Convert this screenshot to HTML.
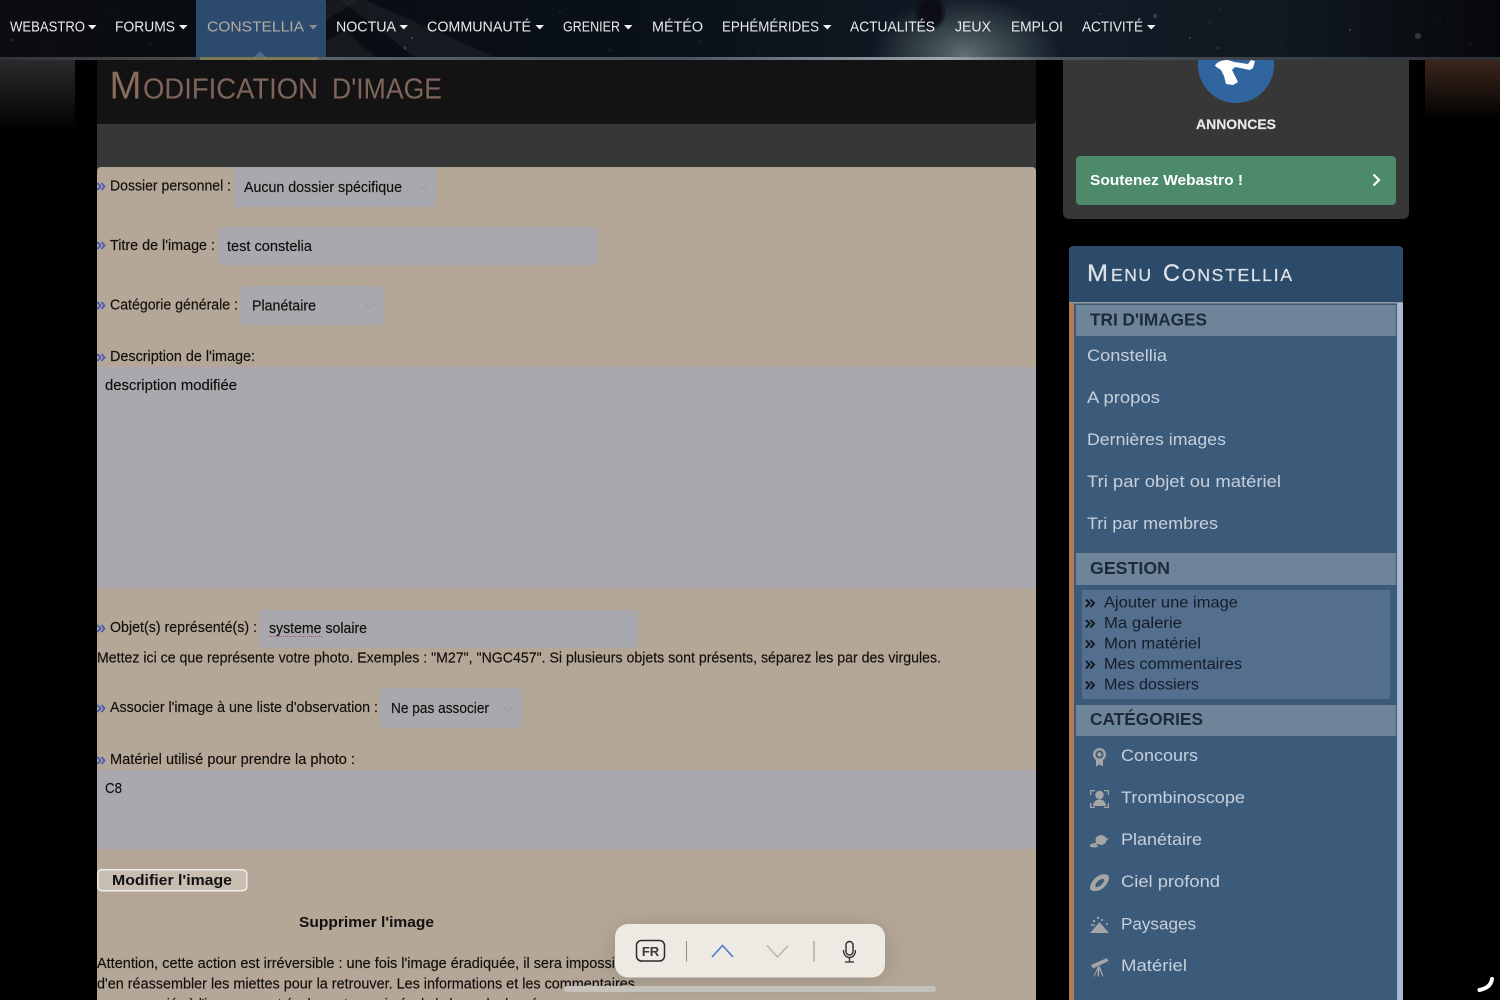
<!DOCTYPE html>
<html lang="fr"><head><meta charset="utf-8"><title>Modification d'image</title>
<style>
html,body{margin:0;padding:0;background:#000;width:1500px;height:1000px;overflow:hidden}
svg{display:block;position:absolute;left:0;top:0;filter:blur(.3px)}
text{font-family:"Liberation Sans",sans-serif}
.n{font-size:15px;fill:#e9ebed}
.f{font-size:14.5px;fill:#120f0b;stroke:#120f0b;stroke-width:.15px}
.l{font-size:17px;fill:#c5d0db}
.h{font-size:17.5px;font-weight:bold;fill:#1d2a38}
.s{font-size:15.5px;fill:#141d28}
</style></head><body>
<svg width="1500" height="1000" viewBox="0 0 1500 1000" xmlns="http://www.w3.org/2000/svg">
<defs>
<linearGradient id="nav" x1="0" x2="1" y1="0" y2="0">
<stop offset="0" stop-color="#0b0d11"/><stop offset=".2" stop-color="#0a0d12"/><stop offset=".45" stop-color="#0a111a"/><stop offset=".7" stop-color="#121c27"/><stop offset=".87" stop-color="#10171f"/><stop offset="1" stop-color="#07080b"/>
</linearGradient>
<radialGradient id="glow" cx=".5" cy=".5" r=".5"><stop offset="0" stop-color="#66757a" stop-opacity=".95"/><stop offset=".6" stop-color="#4c5a60" stop-opacity=".5"/><stop offset="1" stop-color="#4c5a60" stop-opacity="0"/></radialGradient>
<linearGradient id="strip" x1="0" x2="1" y1="0" y2="0">
<stop offset="0" stop-color="#2f3338"/><stop offset=".13" stop-color="#4a4e50"/><stop offset=".17" stop-color="#5f6668"/><stop offset=".45" stop-color="#475260"/><stop offset=".63" stop-color="#9eaab4"/><stop offset=".7" stop-color="#4c5660"/><stop offset="1" stop-color="#2b2e33"/>
</linearGradient>
<linearGradient id="lg" x1="0" x2="0" y1="0" y2="1"><stop offset="0" stop-color="#2a2a2a"/><stop offset="1" stop-color="#000"/></linearGradient>
<linearGradient id="rg" x1="0" x2="0" y1="0" y2="1"><stop offset="0" stop-color="#3b261c"/><stop offset="1" stop-color="#000"/></linearGradient>
<filter id="sh" x="-20%" y="-40%" width="140%" height="180%"><feGaussianBlur stdDeviation="14"/></filter>
<filter id="b1"><feGaussianBlur stdDeviation="1.500"/></filter>
<clipPath id="navc"><rect width="1500" height="58"/></clipPath>
</defs>

<rect width="1500" height="1000" fill="#000"/>
<rect x="0" y="60" width="75" height="70" fill="url(#lg)"/>
<rect x="1425" y="60" width="75" height="60" fill="url(#rg)"/>

<!-- main column -->
<rect x="97" y="60" width="939" height="940" fill="#373737"/>
<path d="M97 58H1036V120a4 4 0 0 1-4 4H97Z" fill="#131313"/>
<path d="M97 171a4 4 0 0 1 4-4H1032a4 4 0 0 1 4 4V1000H97Z" fill="#b4a797"/>

<text x="109.500" y="98.500" font-size="39" fill="#8a6c5c" textLength="32" lengthAdjust="spacingAndGlyphs">M</text>
<text x="143" y="98.500" font-size="28.500" fill="#80665a" textLength="175" lengthAdjust="spacingAndGlyphs">ODIFICATION</text>
<text x="332" y="98.500" font-size="28.500" fill="#80665a" textLength="110" lengthAdjust="spacingAndGlyphs">D'IMAGE</text>

<!-- fields -->
<g fill="#a8a8ae">
<rect x="234" y="167" width="202" height="40" rx="4"/>
<rect x="218" y="227" width="379" height="38" rx="4"/>
<rect x="241" y="286" width="142" height="39" rx="4"/>
<rect x="97" y="367" width="939" height="221"/>
<rect x="259" y="610" width="379" height="38" rx="4"/>
<rect x="380" y="688" width="142" height="40" rx="4"/>
<rect x="97" y="770" width="939" height="79"/>
</g>
<g fill="none" stroke="#9c9ca3" stroke-width="1">
<path d="M418 185l4.500 4 4.500-4"/><path d="M365 304l4.500 4 4.500-4"/><path d="M504 707l4.500 4 4.500-4"/>
</g>

<!-- bullets -->
<g fill="none" stroke="#4a5cb4" stroke-width="1.800">
<path d="M97.500 183l3 3.500-3 3.500M101.500 183l3 3.500-3 3.500"/>
<path d="M97.500 242l3 3.500-3 3.500M101.500 242l3 3.500-3 3.500"/>
<path d="M97.500 302l3 3.500-3 3.500M101.500 302l3 3.500-3 3.500"/>
<path d="M97.500 354l3 3.500-3 3.500M101.500 354l3 3.500-3 3.500"/>
<path d="M97.500 625l3 3.500-3 3.500M101.500 625l3 3.500-3 3.500"/>
<path d="M97.500 705l3 3.500-3 3.500M101.500 705l3 3.500-3 3.500"/>
<path d="M97.500 757l3 3.500-3 3.500M101.500 757l3 3.500-3 3.500"/>
</g>

<!-- form text -->
<text class="f" x="110" y="190.500" textLength="121" lengthAdjust="spacingAndGlyphs">Dossier personnel :</text>
<text class="f" x="244" y="192" textLength="158" lengthAdjust="spacingAndGlyphs">Aucun dossier spécifique</text>
<text class="f" x="110" y="250" textLength="105" lengthAdjust="spacingAndGlyphs">Titre de l'image :</text>
<text class="f" x="227" y="251" textLength="85" lengthAdjust="spacingAndGlyphs">test constelia</text>
<text class="f" x="110" y="309.500" textLength="128" lengthAdjust="spacingAndGlyphs">Catégorie générale :</text>
<text class="f" x="252" y="310.500" textLength="64" lengthAdjust="spacingAndGlyphs">Planétaire</text>
<text class="f" x="110" y="361" textLength="145" lengthAdjust="spacingAndGlyphs">Description de l'image:</text>
<text class="f" x="105" y="390" textLength="132" lengthAdjust="spacingAndGlyphs">description modifiée</text>
<text class="f" x="110" y="632" textLength="147" lengthAdjust="spacingAndGlyphs">Objet(s) représenté(s) :</text>
<text class="f" x="269" y="633" textLength="98" lengthAdjust="spacingAndGlyphs">systeme solaire</text>
<path d="M269 636.500H322" stroke="#b84a68" stroke-width="1" stroke-dasharray="1 1"/>
<text class="f" x="97" y="662.500" textLength="844" lengthAdjust="spacingAndGlyphs">Mettez ici ce que représente votre photo. Exemples : "M27", "NGC457". Si plusieurs objets sont présents, séparez les par des virgules.</text>
<text class="f" x="110" y="712" textLength="268" lengthAdjust="spacingAndGlyphs">Associer l'image à une liste d'observation :</text>
<text class="f" x="391" y="713" textLength="98" lengthAdjust="spacingAndGlyphs">Ne pas associer</text>
<text class="f" x="110" y="764" textLength="245" lengthAdjust="spacingAndGlyphs">Matériel utilisé pour prendre la photo :</text>
<text class="f" x="105" y="793" textLength="17" lengthAdjust="spacingAndGlyphs">C8</text>

<!-- button -->
<rect x="97.750" y="869.750" width="149" height="21" rx="4" fill="#c7bdb0" stroke="#f0ede8" stroke-width="1.500"/>
<text x="112" y="885" textLength="120" lengthAdjust="spacingAndGlyphs" font-size="14.500" font-weight="bold" fill="#111">Modifier l'image</text>
<text x="299" y="927" textLength="135" lengthAdjust="spacingAndGlyphs" font-size="14.500" font-weight="bold" fill="#111">Supprimer l'image</text>
<text class="f" x="97" y="968" textLength="518" lengthAdjust="spacingAndGlyphs">Attention, cette action est irréversible : une fois l'image éradiquée, il sera impossi</text>
<text class="f" x="97" y="988.500" textLength="538" lengthAdjust="spacingAndGlyphs">d'en réassembler les miettes pour la retrouver. Les informations et les commentaires</text>
<text class="f" x="132" y="1009" textLength="420" lengthAdjust="spacingAndGlyphs">associés à l'image seront également supprimés de la base de données</text>

<!-- right card -->
<path d="M1063 58H1409V213a6 6 0 0 1-6 6H1069a6 6 0 0 1-6-6Z" fill="#373737"/>
<circle cx="1236" cy="65" r="38" fill="#31659f"/>
<path d="M1215 66C1216 62 1222 60 1228 60L1234 62 1248 64 1251 60 1255 61 1253 68 1250 70 1235 67 1232 70 1238 82 1233 85 1226 84 1224 76 1221 70Z" fill="#fff"/>
<text x="1196" y="129" textLength="80" lengthAdjust="spacingAndGlyphs" font-size="14" font-weight="bold" fill="#e8e8e8" stroke="#e8e8e8" stroke-width=".2">ANNONCES</text>
<rect x="1076" y="156" width="320" height="49" rx="4" fill="#4c8a6b"/>
<text x="1090" y="185" textLength="153" lengthAdjust="spacingAndGlyphs" font-size="14.500" font-weight="bold" fill="#fff">Soutenez Webastro !</text>
<path d="M1373.500 174.500l5.500 5.500-5.500 5.500" fill="none" stroke="#fff" stroke-width="2.200"/>

<!-- sidebar -->
<rect x="1069" y="300" width="334" height="700" fill="#3c5a7a"/>
<path d="M1069 250a4 4 0 0 1 4-4H1399a4 4 0 0 1 4 4V302H1069Z" fill="#2c4a6a"/>
<rect x="1069" y="302" width="334" height="1.500" fill="#8f9aa6"/>
<rect x="1069" y="303" width="5" height="697" fill="#b07b57"/>
<rect x="1397" y="303" width="6" height="697" fill="#a8b8d0"/>
<rect x="1076" y="305" width="320" height="31" fill="#6e8499"/>
<rect x="1076" y="553" width="320" height="32" fill="#6e8499"/>
<rect x="1082" y="590" width="308" height="109" fill="#546f8e"/>
<rect x="1076" y="705" width="320" height="31" fill="#6e8499"/>

<g fill="#dde2e6" stroke="#dde2e6" stroke-width=".25">
<text x="1087" y="281" font-size="24" textLength="21" lengthAdjust="spacingAndGlyphs">M</text>
<text x="1111" y="281" font-size="17.500" textLength="40" lengthAdjust="spacing">ENU</text>
<text x="1163" y="281" font-size="24" textLength="17" lengthAdjust="spacingAndGlyphs">C</text>
<text x="1182" y="281" font-size="17.500" textLength="110" lengthAdjust="spacing">ONSTELLIA</text>
</g>
<text class="h" x="1090" y="325.500" textLength="117" lengthAdjust="spacingAndGlyphs">TRI D'IMAGES</text>
<text class="h" x="1090" y="574" textLength="80" lengthAdjust="spacingAndGlyphs">GESTION</text>
<text class="h" x="1090" y="725" textLength="113" lengthAdjust="spacingAndGlyphs">CATÉGORIES</text>

<text class="l" x="1087" y="361" textLength="80" lengthAdjust="spacingAndGlyphs">Constellia</text>
<text class="l" x="1087" y="403" textLength="73" lengthAdjust="spacingAndGlyphs">A propos</text>
<text class="l" x="1087" y="445" textLength="139" lengthAdjust="spacingAndGlyphs">Dernières images</text>
<text class="l" x="1087" y="487" textLength="194" lengthAdjust="spacingAndGlyphs">Tri par objet ou matériel</text>
<text class="l" x="1087" y="529" textLength="131" lengthAdjust="spacingAndGlyphs">Tri par membres</text>

<text class="s" x="1104" y="607.500" textLength="134" lengthAdjust="spacingAndGlyphs">Ajouter une image</text>
<text class="s" x="1104" y="628" textLength="78" lengthAdjust="spacingAndGlyphs">Ma galerie</text>
<text class="s" x="1104" y="648.500" textLength="97" lengthAdjust="spacingAndGlyphs">Mon matériel</text>
<text class="s" x="1104" y="669" textLength="138" lengthAdjust="spacingAndGlyphs">Mes commentaires</text>
<text class="s" x="1104" y="689.500" textLength="95" lengthAdjust="spacingAndGlyphs">Mes dossiers</text>
<g fill="none" stroke="#10161e" stroke-width="1.900">
<path d="M1086 599.500l3.500 3.500-3.500 4M1090.500 599.500l3.500 3.500-3.500 4"/>
<path d="M1086 620l3.500 3.500-3.500 4M1090.500 620l3.500 3.500-3.500 4"/>
<path d="M1086 640.500l3.500 3.500-3.500 4M1090.500 640.500l3.500 3.500-3.500 4"/>
<path d="M1086 661l3.500 3.500-3.500 4M1090.500 661l3.500 3.500-3.500 4"/>
<path d="M1086 681.500l3.500 3.500-3.500 4M1090.500 681.500l3.500 3.500-3.500 4"/>
</g>

<text class="l" x="1121" y="761" textLength="77" lengthAdjust="spacingAndGlyphs">Concours</text>
<text class="l" x="1121" y="803" textLength="124" lengthAdjust="spacingAndGlyphs">Trombinoscope</text>
<text class="l" x="1121" y="845" textLength="81" lengthAdjust="spacingAndGlyphs">Planétaire</text>
<text class="l" x="1121" y="887" textLength="99" lengthAdjust="spacingAndGlyphs">Ciel profond</text>
<text class="l" x="1121" y="929.500" textLength="75" lengthAdjust="spacingAndGlyphs">Paysages</text>
<text class="l" x="1121" y="971" textLength="66" lengthAdjust="spacingAndGlyphs">Matériel</text>

<!-- category icons -->
<g fill="#a4a5a5">
<circle cx="1099.500" cy="754.500" r="6.500"/><circle cx="1099.500" cy="754.500" r="4" fill="#3c5a7a"/><circle cx="1099.500" cy="754.500" r="2.200"/>
<path d="M1096 760h7v6.500l-3.500-2-3.500 2Z"/>
<path d="M1090 795v-5h5v1.300h-3.700V795ZM1104 790h5v5h-1.300v-3.700H1104ZM1090 803h1.300v3.700h3.700v1.300h-5ZM1107.700 803h1.300v5h-5v-1.300h3.700Z"/>
<circle cx="1099.500" cy="795" r="4.200"/><path d="M1093 806c.3-4.500 3-6.500 6.500-6.500s6.200 2 6.500 6.500Z"/>
<ellipse cx="1101" cy="840" rx="5.500" ry="5"/><path d="M1090 846c5-1 13-3 19-7.500l-1.500-.5c-5 3-12 5-17 6Z"/><ellipse cx="1094" cy="846" rx="4" ry="1.500"/>
<path d="M1090 888c0-4.500 4-10 9-12.500 4-2 9.500-1.500 10 1.500.5 3.500-3 9-7 12-4.500 3-12 3-12-1Zm6-1c1.800.6 4.500-1 6.500-3.500 1.800-2.200 2.200-4 1-4.500-1.800-.5-4.500 1-6.500 3.300-1.800 2.300-2.300 4-1 4.700Z" fill-rule="evenodd"/>
<path d="M1090 933l9.500-11 9.500 11Z"/><circle cx="1094" cy="921" r="1.200"/><circle cx="1098" cy="918" r="1.200"/><circle cx="1102" cy="920" r="1.100"/><circle cx="1092" cy="925" r="1"/><circle cx="1107" cy="924" r="1"/><circle cx="1094" cy="925" r=".9"/>
<path d="M1091 965l16-7 1.500 3-15.500 7.500Z"/><path d="M1098 966.500h2l3.500 10h-1.200l-2.800-7-.6 7h-1.200l-.4-7-2.800 7h-1.200Z"/>
</g>

<!-- nav -->
<rect width="1500" height="58" fill="url(#nav)"/>
<g clip-path="url(#navc)">
<ellipse cx="965" cy="55" rx="95" ry="60" fill="url(#glow)"/>
<ellipse cx="930" cy="13" rx="14" ry="16" fill="#0a0f15" filter="url(#b1)"/>
<path d="M225 57L330 0h30L260 57Z M300 57L345 30 L375 57Z" fill="#252a2e" opacity=".45"/>
<path d="M340 0h25l130 57h-80Z" fill="#2a3036" opacity=".35"/>
<g fill="#8d98a2" opacity=".3">
<circle cx="12" cy="40" r="1"/><circle cx="48" cy="48" r=".8"/><circle cx="112" cy="14" r=".8"/><circle cx="150" cy="44" r=".8"/><circle cx="412" cy="38" r="1.200"/><circle cx="405" cy="48" r="1.500"/><circle cx="560" cy="12" r=".8"/><circle cx="610" cy="50" r=".8"/><circle cx="700" cy="42" r=".8"/><circle cx="760" cy="50" r=".8"/><circle cx="1155" cy="16" r="2"/><circle cx="1100" cy="14" r=".9"/><circle cx="1190" cy="38" r="1"/><circle cx="1210" cy="22" r=".8"/><circle cx="1280" cy="46" r=".8"/><circle cx="1218" cy="48" r="1"/><circle cx="1350" cy="30" r="1.200"/><circle cx="1220" cy="10" r=".7"/><circle cx="1418" cy="36" r="3"/><circle cx="1440" cy="18" r=".8"/><circle cx="1470" cy="44" r=".8"/>
</g>
</g>
<rect x="196" y="0" width="130" height="57" fill="#2b4a6e"/>
<path d="M254 57l6-6 6 6Z" fill="#4f6c88"/>
<rect y="57" width="1500" height="3" fill="url(#strip)"/>
<rect x="200" y="57" width="118" height="3" fill="#7c7b56"/>

<text class="n" x="10" y="31.500" textLength="75" lengthAdjust="spacingAndGlyphs">WEBASTRO</text>
<text class="n" x="115" y="31.500" textLength="60" lengthAdjust="spacingAndGlyphs">FORUMS</text>
<text x="207" y="31.500" textLength="97" lengthAdjust="spacingAndGlyphs" font-size="15" fill="#b3aca2">CONSTELLIA</text>
<text class="n" x="336" y="31.500" textLength="60" lengthAdjust="spacingAndGlyphs">NOCTUA</text>
<text class="n" x="427" y="31.500" textLength="104" lengthAdjust="spacingAndGlyphs">COMMUNAUTÉ</text>
<text class="n" x="563" y="31.500" textLength="57" lengthAdjust="spacingAndGlyphs">GRENIER</text>
<text class="n" x="652" y="31.500" textLength="51" lengthAdjust="spacingAndGlyphs">MÉTÉO</text>
<text class="n" x="722" y="31.500" textLength="97" lengthAdjust="spacingAndGlyphs">EPHÉMÉRIDES</text>
<text class="n" x="850" y="31.500" textLength="85" lengthAdjust="spacingAndGlyphs">ACTUALITÉS</text>
<text class="n" x="955" y="31.500" textLength="36" lengthAdjust="spacingAndGlyphs">JEUX</text>
<text class="n" x="1011" y="31.500" textLength="52" lengthAdjust="spacingAndGlyphs">EMPLOI</text>
<text class="n" x="1082" y="31.500" textLength="61" lengthAdjust="spacingAndGlyphs">ACTIVITÉ</text>
<g fill="#f2f3f4">
<path d="M88 25h8.500l-4.250 4.500Z"/><path d="M179 25h8.500l-4.250 4.500Z"/><path d="M309 25h8.500l-4.250 4.500Z" fill="#8f8c88"/><path d="M399.500 25h8.500l-4.250 4.500Z"/><path d="M535.500 25h8.500l-4.250 4.500Z"/><path d="M624 25h8.500l-4.250 4.500Z"/><path d="M823 25h8.500l-4.250 4.500Z"/><path d="M1147 25h8.500l-4.250 4.500Z"/>
</g>

<!-- floating find bar -->
<rect x="615" y="930" width="270" height="50" rx="14" fill="#000" opacity=".16" filter="url(#sh)"/>
<rect x="615" y="924" width="270" height="53.500" rx="13" fill="#ede9e3"/>
<rect x="636.500" y="940.500" width="28" height="20.500" rx="5" fill="none" stroke="#2c2c2c" stroke-width="1.500"/>
<text x="650.500" y="956" text-anchor="middle" font-size="13" font-weight="bold" fill="#3a3a3a">FR</text>
<rect x="686" y="941" width="1" height="20.500" fill="#8d8a85"/>
<rect x="813.500" y="941" width="1" height="20.500" fill="#8d8a85"/>
<path d="M712 957l10.500-11.500L733 957" fill="none" stroke="#4c78c8" stroke-width="1.600"/>
<path d="M767 945.500l10.500 11.500L788 945.500" fill="none" stroke="#b9b7b2" stroke-width="1.500"/>
<rect x="846" y="941.500" width="7" height="13.500" rx="3.500" fill="none" stroke="#2c2c2c" stroke-width="1.400"/>
<path d="M843.500 950c0 4.500 2.500 7.500 6 7.500s6-3 6-7.500M849.500 957.500V961.500M845 962h9" fill="none" stroke="#2c2c2c" stroke-width="1.300"/>
<rect x="564" y="986" width="372" height="6" rx="3" fill="#c5c2bc"/>

<!-- corner mark -->
<path d="M1492 979c-.8 5.500-5 9.500-12.500 11" fill="none" stroke="#fff" stroke-width="4" stroke-linecap="round"/>
</svg>
</body></html>
